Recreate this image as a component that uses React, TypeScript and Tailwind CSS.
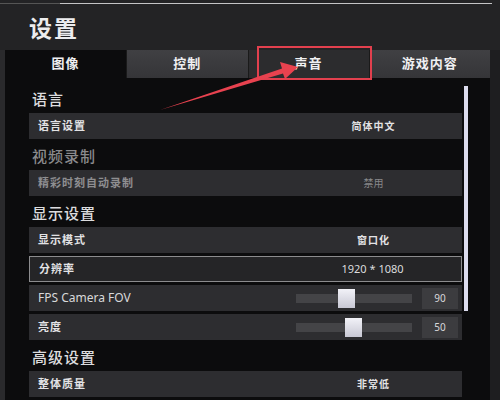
import React from "react";

type Row =
  | { kind: "header"; label: string; dim?: boolean }
  | { kind: "value"; label: string; value: string; dim?: boolean; selected?: boolean }
  | { kind: "slider"; label: string; value: number; thumb: number; latin?: boolean };

const rows: Row[] = [
  { kind: "header", label: "语言" },
  { kind: "value", label: "语言设置", value: "简体中文" },
  { kind: "header", label: "视频录制", dim: true },
  { kind: "value", label: "精彩时刻自动录制", value: "禁用", dim: true },
  { kind: "header", label: "显示设置" },
  { kind: "value", label: "显示模式", value: "窗口化" },
  { kind: "value", label: "分辨率", value: "1920 * 1080", selected: true },
  { kind: "slider", label: "FPS Camera FOV", value: 90, thumb: 42, latin: true },
  { kind: "slider", label: "亮度", value: 50, thumb: 49 },
  { kind: "header", label: "高级设置" },
  { kind: "value", label: "整体质量", value: "非常低" },
  { kind: "value", label: "", value: "" },
];

const tabs = ["图像", "控制", "声音", "游戏内容"];

function SettingRow({ row }: { row: Row }) {
  if (row.kind === "header") {
    return (
      <div
        className={`h-[28px] flex items-center pl-[3px] text-[15px] font-medium tracking-[1px] ${
          row.dim ? "text-[#8a8a8c]" : "text-[#dcdcde]"
        }`}
      >
        {row.label}
      </div>
    );
  }

  const base = "h-[26px] mb-[3px] flex items-center";

  if (row.kind === "slider") {
    return (
      <div className={`${base} bg-[#2d2d30]`}>
        <span
          className={`pl-[9px] flex-1 ${
            row.latin ? "text-[12px] text-[#d8d8da]" : "text-[11px] font-bold text-[#e2e2e4] tracking-[1px]"
          }`}
        >
          {row.label}
        </span>
        <div className="relative w-[116px] h-[9px] bg-[#444447] mr-[10px]">
          <div
            className="absolute top-[-5px] w-[17px] h-[19px] bg-gradient-to-b from-[#f2f2f8] to-[#c8c8d4]"
            style={{ left: row.thumb }}
          />
        </div>
        <div className="w-[36px] h-[21px] mr-[4px] bg-[#3c3c3f] flex items-center justify-center text-[10px] text-[#d8d8da]">
          {row.value}
        </div>
      </div>
    );
  }

  return (
    <div
      className={`${base} ${
        row.selected ? "bg-[#252527] border border-[#8c8c8e]" : "bg-[#2d2d30]"
      }`}
    >
      <span
        className={`pl-[9px] flex-1 text-[11px] font-bold tracking-[1px] ${
          row.dim ? "text-[#8e8e90]" : "text-[#e2e2e4]"
        }`}
      >
        {row.label}
      </span>
      <span
        className={`w-[177px] text-center ${
          row.selected
            ? "text-[11px] text-[#dcdcde]"
            : row.dim
            ? "text-[10px] text-[#88888a]"
            : "text-[10px] font-bold text-[#e2e2e4] tracking-[1px]"
        }`}
      >
        {row.value}
      </span>
    </div>
  );
}

export default function App() {
  return (
    <div
      className="relative w-[500px] h-[400px] overflow-hidden bg-[#232325]"
      style={{ fontFamily: '"Noto Sans", "Noto Sans CJK SC", sans-serif' }}
    >
      {/* top rule */}
      <div className="h-[7px] pt-[3px] flex">
        <div className="w-[60px] h-[1px] bg-[#555]" />
        <div className="w-[432px] h-[1px] bg-[#c4c4c6]" />
      </div>

      {/* title */}
      <div className="h-[43px] flex items-center pl-[29px] text-[23px] font-bold text-[#ececee] tracking-[2px]">
        设置
      </div>

      <div className="flex">
        <div className="w-[5px] bg-[#2a2a2c]" />
        <div className="w-[485px]">
          {/* tabs */}
          <div className="grid grid-cols-4 h-[28px]">
            {tabs.map((t, i) => (
              <div
                key={t}
                className={`flex items-center justify-center text-[13px] font-bold tracking-[1px] text-[#f0f0f2] ${
                  i === 0
                    ? "bg-[#0c0c0d]"
                    : i === 2
                    ? "bg-[#2c2c2e] border-l border-[#1a1a1a]"
                    : "bg-gradient-to-b from-[#404043] to-[#353538] border-l border-[#1a1a1a]"
                }`}
              >
                {t}
              </div>
            ))}
          </div>

          {/* content */}
          <div className="bg-[#0c0c0d] h-[322px] flex pt-[7px]">
            <div className="w-[24px]" />
            <div className="w-[433px]">
              {rows.map((r, i) => (
                <SettingRow key={i} row={r} />
              ))}
            </div>
            <div className="w-[2px]" />
            <div className="w-[4px] h-[225px] mt-[1px] bg-[#dcdcee]" />
          </div>
        </div>
        <div className="flex-1 bg-[#1e1e20]" />
      </div>

      {/* annotation box */}
      <div className="absolute left-[257px] top-[46px] w-[115px] h-[34px] border-2 border-[#e2404e]" />

      {/* annotation arrow */}
      <svg className="absolute left-0 top-0" width="500" height="400" viewBox="0 0 500 400">
        <polygon
          points="160,110 283,73.5 285,79 298,67 280,62 282,68.5"
          fill="#e8424f"
        />
      </svg>
    </div>
  );
}
